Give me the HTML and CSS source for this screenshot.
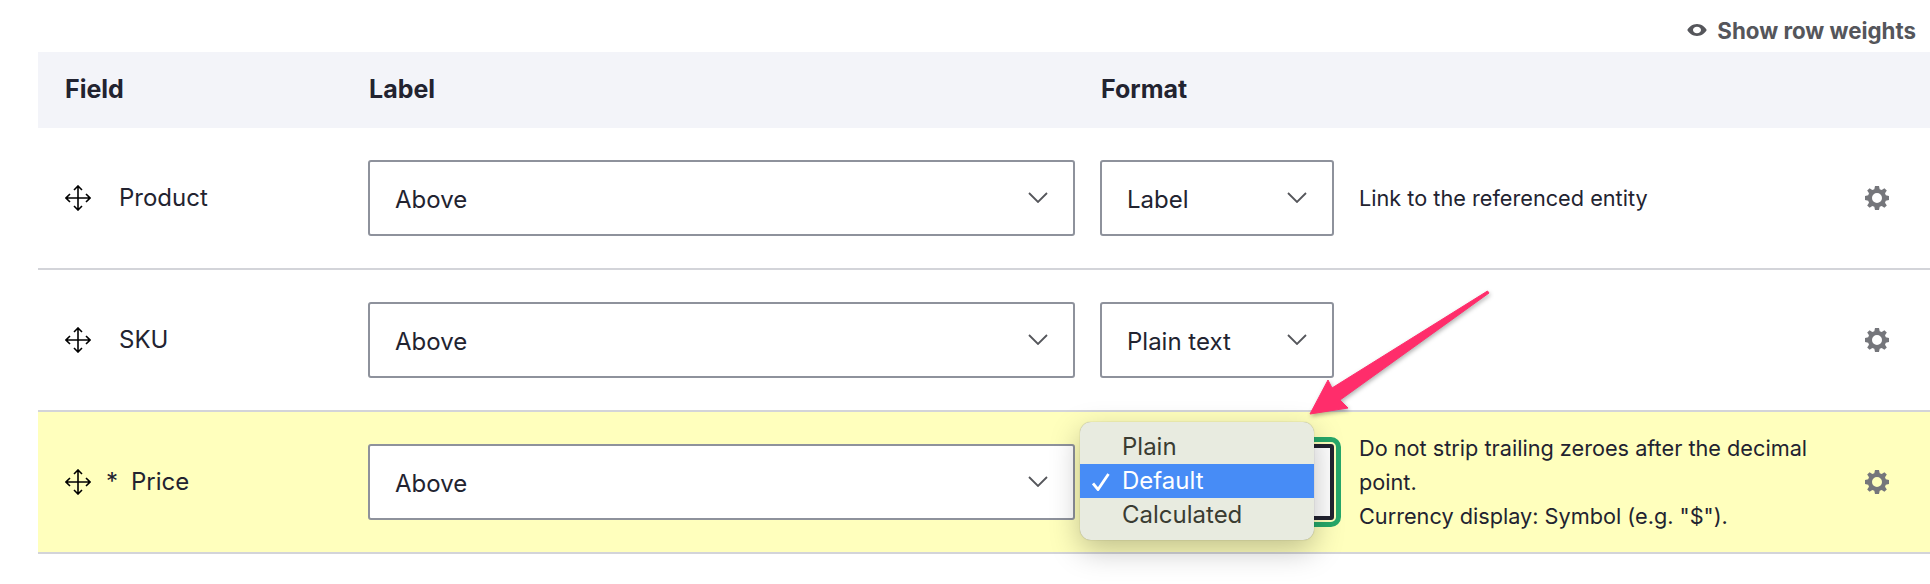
FILE: index.html
```html
<!DOCTYPE html>
<html lang="en">
<head>
    <meta charset="UTF-8">
    <title>Manage display</title>
    <link rel="stylesheet" href="styles.css">
</head>
<body>

    <div class="weights">
        <svg class="eye" width="20" height="14" viewBox="0 0 20 14"><path fill="#55565b" fill-rule="evenodd" d="M10 1C5.600 1 2 3.800 0.300 7 2 10.200 5.600 13 10 13s8-2.800 9.700-6C18 3.800 14.400 1 10 1zm0 2.800c2.300 0 4 1.400 4 3.200s-1.700 3.200-4 3.200-4-1.400-4-3.200 1.700-3.200 4-3.200z"/></svg>
        Show row weights
    </div>

    <div class="fields">
        <div class="row head">
            <div>Field</div>
            <div>Label</div>
            <div>Format</div>
        </div>

        <!-- Product -->
        <div class="row">
            <div class="name">
                <svg class="move" width="26" height="26" viewBox="0 0 26 26"><path fill="none" stroke="#000" stroke-width="1.600" d="M13 1v24M1 13h24M9 5l4-4 4 4M9 21l4 4 4-4M5 9l-4 4 4 4M21 9l4 4-4 4"/></svg>
                <span class="title">Product</span>
            </div>
            <div><select class="pick wide"><option>Above</option></select></div>
            <div><select class="pick"><option>Label</option></select></div>
            <div class="summary">Link to the referenced entity</div>
            <svg class="gear" width="24" height="24" viewBox="0 0 24 24"><path fill="#75767b" fill-rule="evenodd" d="M10 0h4l.7 3.200 2 .8L19.400 2.200l2.400 2.400L20 7.300l.8 2L24 10v4l-3.200.7-.8 2 1.800 2.700-2.400 2.400-2.700-1.800-2 .8L14 24h-4l-.7-3.200-2-.8-2.700 1.800-2.400-2.400L4 16.700l-.8-2L0 14v-4l3.200-.7.8-2L2.200 4.600l2.400-2.400L7.300 4l2-.8zM12 7a5 5 0 1 0 0 10 5 5 0 0 0 0-10z"/></svg>
        </div>

        <!-- SKU -->
        <div class="row">
            <div class="name">
                <svg class="move" width="26" height="26" viewBox="0 0 26 26"><path fill="none" stroke="#000" stroke-width="1.600" d="M13 1v24M1 13h24M9 5l4-4 4 4M9 21l4 4 4-4M5 9l-4 4 4 4M21 9l4 4-4 4"/></svg>
                <span class="title">SKU</span>
            </div>
            <div><select class="pick wide"><option>Above</option></select></div>
            <div><select class="pick"><option>Plain text</option></select></div>
            <div class="summary"></div>
            <svg class="gear" width="24" height="24" viewBox="0 0 24 24"><path fill="#75767b" fill-rule="evenodd" d="M10 0h4l.7 3.200 2 .8L19.400 2.200l2.400 2.400L20 7.300l.8 2L24 10v4l-3.200.7-.8 2 1.800 2.700-2.400 2.400-2.700-1.800-2 .8L14 24h-4l-.7-3.200-2-.8-2.700 1.800-2.400-2.400L4 16.700l-.8-2L0 14v-4l3.200-.7.8-2L2.200 4.600l2.400-2.400L7.300 4l2-.8zM12 7a5 5 0 1 0 0 10 5 5 0 0 0 0-10z"/></svg>
        </div>

        <!-- Price, changed row -->
        <div class="row changed">
            <div class="name">
                <svg class="move" width="26" height="26" viewBox="0 0 26 26"><path fill="none" stroke="#000" stroke-width="1.600" d="M13 1v24M1 13h24M9 5l4-4 4 4M9 21l4 4 4-4M5 9l-4 4 4 4M21 9l4 4-4 4"/></svg>
                <span class="star">*</span>
                <span class="title">Price</span>
            </div>
            <div><select class="pick wide"><option>Above</option></select></div>
            <div class="focus-cell">
                <select class="pick focused"><option>Default</option></select>
                <ul class="menu">
                    <li>Plain</li>
                    <li class="on">
                        <svg class="tick" width="18" height="18" viewBox="0 0 18 18"><path fill="none" stroke="#fff" stroke-width="2.800" d="M1 10.500L6 16.500 16.500 1"/></svg>
                        Default
                    </li>
                    <li>Calculated</li>
                </ul>
            </div>
            <div class="summary">Do not strip trailing zeroes after the decimal point.<br>Currency display: Symbol (e.g. "$").</div>
            <svg class="gear" width="24" height="24" viewBox="0 0 24 24"><path fill="#75767b" fill-rule="evenodd" d="M10 0h4l.7 3.200 2 .8L19.400 2.200l2.400 2.400L20 7.300l.8 2L24 10v4l-3.200.7-.8 2 1.800 2.700-2.400 2.400-2.700-1.800-2 .8L14 24h-4l-.7-3.200-2-.8-2.700 1.800-2.400-2.400L4 16.700l-.8-2L0 14v-4l3.200-.7.8-2L2.200 4.600l2.400-2.400L7.300 4l2-.8zM12 7a5 5 0 1 0 0 10 5 5 0 0 0 0-10z"/></svg>
        </div>
    </div>

    <!-- annotation arrow on top of the screenshot -->
    <svg class="arrow" width="210" height="150" viewBox="0 0 210 150">
        <path fill="#ff2d6b" stroke="#ff2d6b" stroke-linejoin="round" d="M197.500 11L199 13 50 120 58 128 20 134 38 100 42 108z"/>
    </svg>

</body>
</html>
```

FILE: styles.css
```css
html, body {
    margin: 0;
    height: 584px;
    overflow: hidden;
}
body {
    font-family: Inter, sans-serif;
    font-size: 24px;
    color: #222330;
    background: #fff;
    position: relative;
}
.weights {
    height: 52px;
    display: flex;
    align-items: center;
    justify-content: flex-end;
    gap: 10px;
    padding-right: 14px;
    padding-top: 8px;
    font-size: 22.300px;
    font-weight: 700;
    color: #55565b;
    box-sizing: border-box;
}
.fields {
    margin-left: 38px;
}
.row {
    display: grid;
    grid-template-columns: 303px 732px 259px 1fr 24px;
    align-items: center;
    height: 142px;
    box-sizing: border-box;
    padding: 0 41px 0 27px;
    border-bottom: 2px solid #d3d4d9;
}
.row.head {
    height: 76px;
    background: #f3f4f9;
    border-bottom: none;
    font-size: 25px;
    font-weight: 700;
    padding-bottom: 2px;
}
.row.head div + div {
    padding-left: 1px;
}
.row.changed {
    background: #ffffbd;
}
.name {
    display: flex;
    align-items: center;
    padding-bottom: 2px;
}
.move {
    margin-right: 28px;
    margin-top: 2px;
    flex: none;
}
.changed .move {
    margin-right: 15px;
}
.star {
    margin-right: 13px;
}
.pick {
    appearance: none;
    display: block;
    width: 234px;
    height: 76px;
    box-sizing: border-box;
    padding: 2px 40px 0 25px;
    font-family: Inter, sans-serif;
    font-size: 24px;
    color: #222330;
    background: #fff url("data:image/svg+xml,%3Csvg xmlns='http://www.w3.org/2000/svg' width='20' height='11' viewBox='0 0 20 11'%3E%3Cpath fill='none' stroke='%2355565b' stroke-width='1.800' d='M1 1l9 9 9-9'/%3E%3C/svg%3E") no-repeat right 25px top 30px;
    border: 2px solid #8e929c;
    border-radius: 3px;
}
.pick.wide {
    width: 707px;
}
.focus-cell {
    position: relative;
}
.pick.focused {
    border: 4px solid #222330;
    outline: 5px solid #26a769;
    outline-offset: 2px;
    border-radius: 3px;
}
.menu {
    position: absolute;
    top: -22px;
    left: -20px;
    width: 234px;
    height: 118px;
    box-sizing: border-box;
    margin: 0;
    padding: 8px 0;
    list-style: none;
    background: #e8ebe0;
    border-radius: 11px;
    box-shadow: 0 0 1px rgba(0,0,0,0.4), 0 10px 30px rgba(0,0,0,0.25);
    color: #3a3c32;
}
.menu li {
    position: relative;
    height: 34px;
    line-height: 34px;
    padding-left: 42px;
}
.menu li.on {
    background: #478cf6;
    color: #fff;
}
.tick {
    position: absolute;
    left: 12px;
    top: 9px;
}
.summary {
    font-size: 21.700px;
    line-height: 34px;
    width: 480px;
}
.arrow {
    position: absolute;
    left: 1290px;
    top: 280px;
    filter: drop-shadow(1px 2px 2px rgba(0,0,0,0.3));
}
```
